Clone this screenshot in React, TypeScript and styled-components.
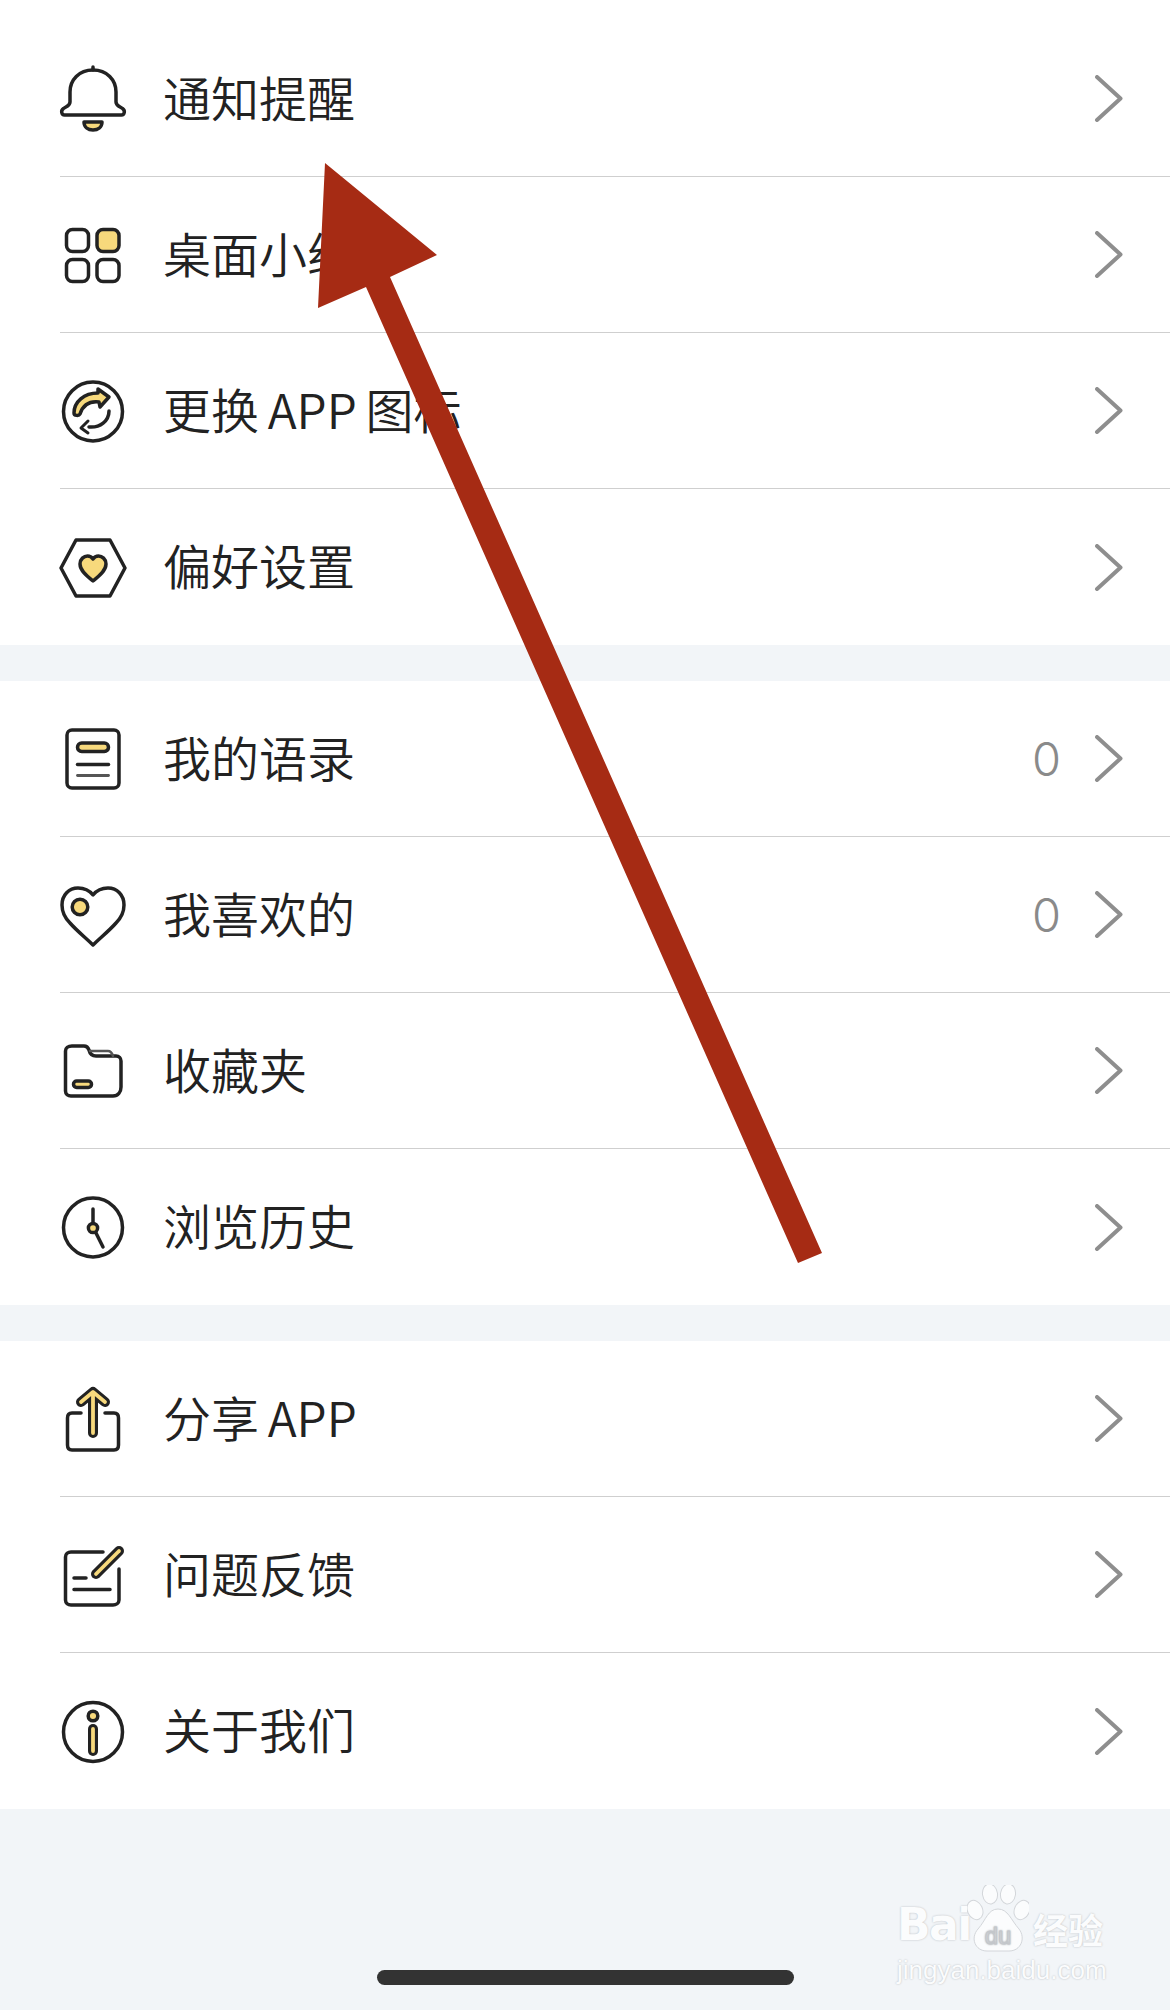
import React from 'react';
import styled, { createGlobalStyle } from 'styled-components';

const INK = '#222222';
const GOLD = '#f7d97c';

const GlobalStyle = createGlobalStyle`
    html, body {
        margin: 0;
        padding: 0;
        background: #f2f5f8;
        font-family: "Noto Sans CJK SC", "Noto Sans", sans-serif;
    }
`;

const Line = styled.g`
    fill: none;
    stroke: ${INK};
    stroke-width: 3.5;
    stroke-linecap: round;
    stroke-linejoin: round;
`;

const Gold = styled.g`
    fill: ${GOLD};
    stroke: ${INK};
    stroke-width: 3.5;
    stroke-linecap: round;
    stroke-linejoin: round;
`;

// a thick gold stroke with a dark edge, drawn twice
function GoldStroke({ d }: { d: string }) {
    return (
        <g fill="none" strokeLinecap="round" strokeLinejoin="round">
            <path d={d} stroke={INK} strokeWidth={10} />
            <path d={d} stroke={GOLD} strokeWidth={3.8} />
        </g>
    );
}

const icons: Record<string, React.ReactNode> = {
    bell: (
        <>
            <Line>
                <path d="M33 1v3" />
                <path d="M33 4C19 4 10 14 10 26V36C10 40 6 40.5 3.5 42.5C0.5 44.5 1.5 49 4.5 49H61.5C64.5 49 65.5 44.5 62.5 42.5C60 40.5 56 40 56 36V26C56 14 47 4 33 4Z" />
            </Line>
            <Gold>
                <path d="M24 56H42C42 61 38 64 33 64C28 64 24 61 24 56Z" />
            </Gold>
        </>
    ),
    grid: (
        <>
            <Line>
                <rect x="6.5" y="7.5" width="22" height="22" rx="6" />
                <rect x="6.5" y="37.5" width="22" height="22" rx="6" />
                <rect x="37" y="37.5" width="22" height="22" rx="6" />
            </Line>
            <Gold>
                <rect x="37" y="7.5" width="22" height="22" rx="6" />
            </Gold>
        </>
    ),
    refresh: (
        <>
            <Line>
                <circle cx="33" cy="33.5" r="29.5" />
                <path d="M49 33C49 43 40 50 29 49" />
                <path d="M28 43L21 50L28 55" strokeWidth="3" />
            </Line>
            <Gold>
                <path d="M14 35C14 24 24 15 38 15L38 11L49 19L40 29L39 24C30 23 23 27 20 36C19 38 14 38 14 35Z" />
            </Gold>
        </>
    ),
    hexagon: (
        <>
            <Line>
                <path d="M16 6H50L65 34L50 62H16L1 34Z" />
            </Line>
            <Gold>
                <path d="M33 47C28 43 20 37 20 30C20 25 24 22 27.5 22C30 22 32 23.5 33 25C34 23.5 36 22 38.5 22C42 22 46 25 46 30C46 37 38 43 33 47Z" />
            </Gold>
        </>
    ),
    note: (
        <>
            <Line>
                <rect x="7" y="4" width="52" height="58" rx="5" />
                <path d="M17.5 38.5H48.5" />
                <path d="M17.5 49.5H48.5" strokeWidth="2.8" stroke="#555" />
            </Line>
            <Gold>
                <rect x="17.5" y="17" width="31" height="8.5" rx="4.2" />
            </Gold>
        </>
    ),
    heart: (
        <>
            <Line>
                <path d="M33 13C29 8 24 6 18 6C9 6 2 13 2 23C2 30 5 36 10 41C17 49 26 56 33 63C40 56 49 49 56 41C61 36 64 30 64 23C64 13 57 6 48 6C42 6 37 8 33 13Z" />
            </Line>
            <Gold>
                <circle cx="20" cy="25" r="7.8" />
            </Gold>
        </>
    ),
    folder: (
        <>
            <Line>
                <path d="M5.5 13C5.5 10 8 8 12 8H24C27 8 28 9 29 12C30 16 32 18 36 18H56C59 18 61 20 61 23V49C61 54 58 58 53 58H11C8 58 5.5 56 5.5 53Z" />
                <path d="M30 13H48C51 13 52 15 53 18" strokeWidth="2.6" stroke="#555" />
            </Line>
            <Gold>
                <rect x="13.5" y="43" width="18" height="6.5" rx="3.2" />
            </Gold>
        </>
    ),
    clock: (
        <>
            <Line>
                <circle cx="33" cy="33.5" r="29.5" />
                <path d="M33 15V30M35 37L43 53" />
            </Line>
            <Gold>
                <circle cx="33" cy="34" r="4.6" />
            </Gold>
        </>
    ),
    share: (
        <>
            <Line>
                <path d="M21 27H12C9 27 7.5 29 7.5 32V59C7.5 62 9 64 12 64H54C57 64 58.5 62 58.5 59V32C58.5 29 57 27 54 27H45" />
            </Line>
            <GoldStroke d="M33 47V7M21 16L33 6L45 16" />
        </>
    ),
    edit: (
        <>
            <Line>
                <path d="M43 10H11C8 10 5.5 12 5.5 15V58C5.5 61 8 63 11 63H53C56 63 59 61 59 58V27" />
                <path d="M14 36H26M14 47.5H50" />
            </Line>
            <GoldStroke d="M36 32L59 9" />
        </>
    ),
    info: (
        <>
            <Line>
                <circle cx="33" cy="34" r="29.5" />
            </Line>
            <Gold>
                <circle cx="33" cy="18" r="4.8" />
            </Gold>
            <GoldStroke d="M33 31V53" />
        </>
    ),
};

interface Item {
    icon: string;
    label: string;
    count?: number;
}

const groups: Item[][] = [
    [
        { icon: 'bell', label: '通知提醒' },
        { icon: 'grid', label: '桌面小组件' },
        { icon: 'refresh', label: '更换 APP 图标' },
        { icon: 'hexagon', label: '偏好设置' },
    ],
    [
        { icon: 'note', label: '我的语录', count: 0 },
        { icon: 'heart', label: '我喜欢的', count: 0 },
        { icon: 'folder', label: '收藏夹' },
        { icon: 'clock', label: '浏览历史' },
    ],
    [
        { icon: 'share', label: '分享 APP' },
        { icon: 'edit', label: '问题反馈' },
        { icon: 'info', label: '关于我们' },
    ],
];

function App() {
    return (
        <Page>
            <GlobalStyle />
            {groups.map((group, i) => (
                <Group key={i}>
                    {group.map((item) => (
                        <Row key={item.label}>
                            <Icon viewBox="0 0 66 66">{icons[item.icon]}</Icon>
                            <Body>
                                <Label>{item.label}</Label>
                                {item.count !== undefined && <Count>{item.count}</Count>}
                                <Chevron viewBox="0 0 29 47">
                                    <path d="M3 2L26.5 23.5L3 45" />
                                </Chevron>
                            </Body>
                        </Row>
                    ))}
                </Group>
            ))}

            <Watermark>
                <Brand>Bai</Brand>
                <Paw viewBox="0 0 62 68">
                    <ellipse cx="8" cy="25" rx="7.5" ry="10" transform="rotate(-25 8 25)" />
                    <ellipse cx="23" cy="9" rx="7.5" ry="10" transform="rotate(-8 23 9)" />
                    <ellipse cx="41" cy="9" rx="7.5" ry="10" transform="rotate(8 41 9)" />
                    <ellipse cx="55" cy="25" rx="7.5" ry="10" transform="rotate(25 55 25)" />
                    <path d="M31 24C41 24 44 35 52 44C59 53 54 66 42 66H20C8 66 3 53 11 44C19 35 21 24 31 24Z" />
                    <text x="31" y="59" textAnchor="middle">du</text>
                </Paw>
                <BrandCn>经验</BrandCn>
                <Site>jingyan.baidu.com</Site>
            </Watermark>

            <HomeBar />

            <ArrowMark viewBox="0 0 1170 2010">
                <polygon points="325,163 437,255 390,277 822,1253 798,1263 366,287 318,308" />
            </ArrowMark>
        </Page>
    );
}

const Page = styled.div`
    position: relative;
    height: 2010px;
    overflow: hidden;
    box-sizing: border-box;
    background: #f2f5f8;
`;

const Group = styled.div`
    background: #ffffff;
    margin-bottom: 36px;

    &:first-child {
        padding-top: 21px;
    }
`;

const Row = styled.div`
    display: flex;
    align-items: center;
    height: 156px;
    padding-left: 60px;
    box-sizing: border-box;

    &:last-child > div {
        border-bottom: none;
    }
`;

const Icon = styled.svg`
    width: 66px;
    height: 66px;
    flex: none;
    margin-right: 37px;
    overflow: visible;
`;

const Body = styled.div`
    flex: 1;
    align-self: stretch;
    display: flex;
    align-items: center;
    padding-right: 47px;
    margin-left: -103px;
    padding-left: 103px;
    border-bottom: 1.5px solid #cfcfcf;
`;

const Label = styled.div`
    flex: 1;
    font-size: 48px;
    font-weight: 350;
    line-height: 60px;
    padding-bottom: 6px;
    color: #222222;
    white-space: pre;
    word-spacing: -2px;
`;

const Count = styled.div`
    font-family: "Inter", "Liberation Sans", sans-serif;
    font-size: 47px;
    font-weight: 300;
    color: #8a8a8a;
    margin-right: 33px;
`;

const Chevron = styled.svg`
    width: 29px;
    height: 47px;
    flex: none;
    fill: none;
    stroke: #8e8e8e;
    stroke-width: 4;
    stroke-linecap: round;
    stroke-linejoin: round;
`;

const Watermark = styled.div`
    position: absolute;
    left: 897px;
    top: 1885px;
    width: 215px;
    display: grid;
    grid-template-columns: 70px 66px 72px;
    grid-template-rows: 68px auto;
    color: #fbfcfd;
    text-shadow: 0 0 2px #b4b7bb;
`;

const Brand = styled.div`
    align-self: end;
    font-family: "DejaVu Sans", sans-serif;
    font-size: 44px;
    font-weight: 700;
    line-height: 56px;
    letter-spacing: -1.5px;
`;

const Paw = styled.svg`
    width: 62px;
    height: 68px;
    fill: #fbfcfd;
    stroke: #d3d6da;
    stroke-width: 1;

    text {
        font-family: "Liberation Sans", sans-serif;
        font-size: 24px;
        fill: #e4e6e9;
        stroke: #c4c7cb;
    }
`;

const BrandCn = styled.div`
    align-self: end;
    font-size: 35px;
    font-weight: 700;
    line-height: 48px;
    white-space: nowrap;
`;

const Site = styled.div`
    grid-column: 1 / -1;
    margin-top: 2px;
    font-family: "Liberation Sans", sans-serif;
    font-size: 26px;
    line-height: 30px;
    white-space: nowrap;
`;

const HomeBar = styled.div`
    position: absolute;
    left: 377px;
    top: 1970px;
    width: 417px;
    height: 15px;
    border-radius: 8px;
    background: #333333;
`;

const ArrowMark = styled.svg`
    position: absolute;
    left: 0;
    top: 0;
    width: 1170px;
    height: 2010px;
    fill: #a62b14;
    pointer-events: none;
`;

export default App;
